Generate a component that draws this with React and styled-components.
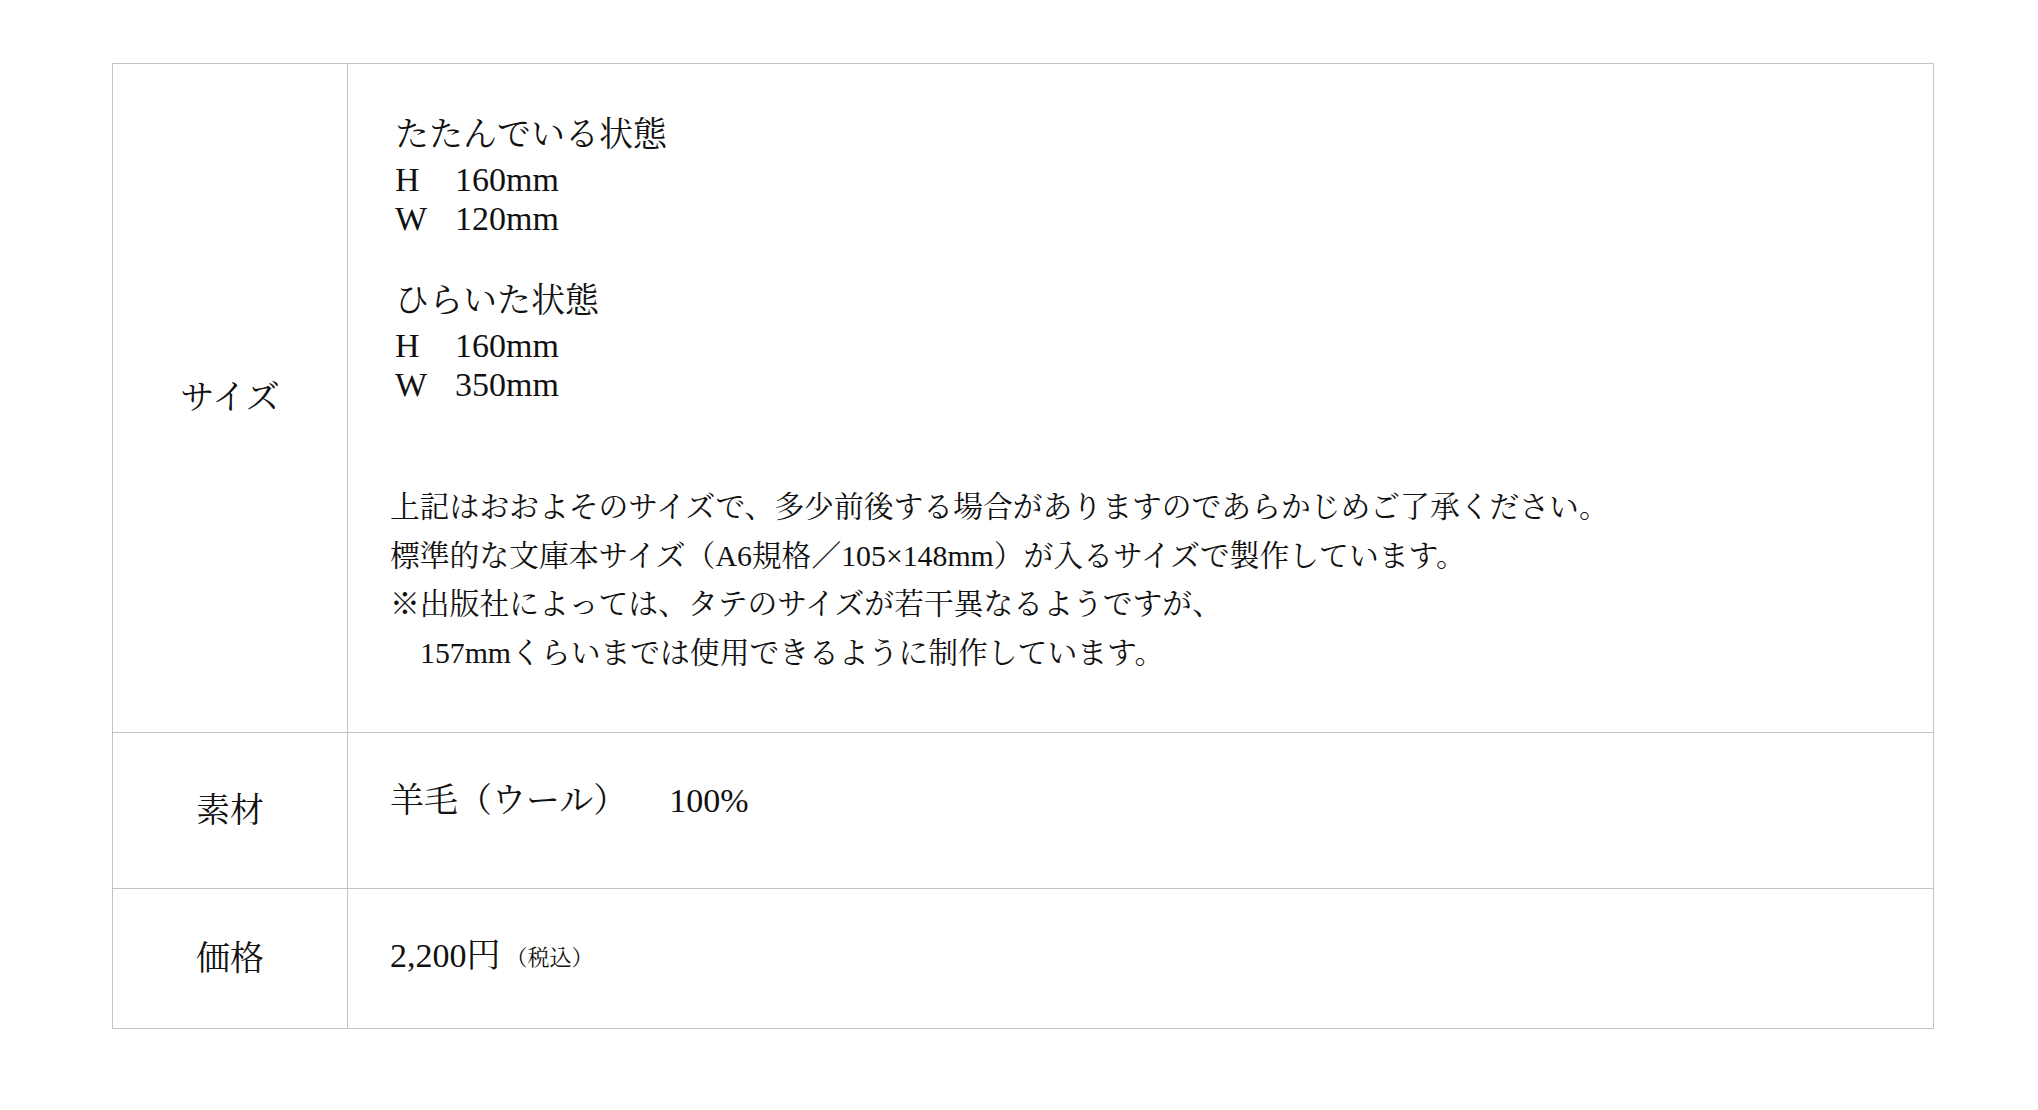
import React from "react";
import styled, { createGlobalStyle } from "styled-components";

const GlobalStyle = createGlobalStyle`
  html, body {
    margin: 0;
    padding: 0;
    background: #ffffff;
  }
  body {
    font-family: "Liberation Serif", "Noto Serif CJK JP", "Noto Sans CJK JP", serif;
    color: #111111;
  }
`;

const Page = styled.div`
  padding: 63px 0 60px 112px;
`;

const Table = styled.div`
  width: 1822px;
  box-sizing: border-box;
  border: 1px solid #c4c4c4;
  display: flex;
  flex-direction: column;
`;

const Row = styled.div`
  display: grid;
  grid-template-columns: 235px 1fr;
  border-bottom: ${(p) => (p.$last ? "none" : "1px solid #c4c4c4")};
`;

const Label = styled.div`
  border-right: 1px solid #c4c4c4;
  display: flex;
  align-items: center;
  justify-content: center;
  font-size: 34px;
  line-height: 48px;
`;

const Value = styled.div`
  padding: ${(p) => p.$pt}px 40px ${(p) => p.$pb}px 42px;
  font-size: 34px;
  line-height: 48px;
`;

const ValueLine = styled.div`
  height: 48px;
  display: flex;
  align-items: center;
  white-space: pre;
`;

const SizeBlock = styled.div`
  padding-left: 5px;
  margin-top: ${(p) => p.$mt || 0}px;
`;

const BlockTitle = styled.div`
  font-size: 34px;
  line-height: 48px;
  padding-top: 2px;
  margin-bottom: 1px;
`;

const Dimension = styled.div`
  display: flex;
  font-size: 34px;
  line-height: 39px;
`;

const Axis = styled.span`
  display: inline-block;
  width: 60px;
`;

const Note = styled.div`
  margin-top: 79px;
  font-size: 29.8px;
  line-height: 48.5px;
`;

const NoteLine = styled.div`
  padding-left: ${(p) => (p.$indent ? "30px" : "0")};
  white-space: nowrap;
`;

const Amount = styled.span`
  font-size: 34px;
  line-height: 1;
`;

const TaxNote = styled.span`
  font-size: 22px;
  line-height: 1;
  margin-left: 5px;
  padding-top: 4px;
`;

const Material = styled.span`
  line-height: 1;
`;

const Percent = styled.span`
  margin-left: 42px;
  line-height: 1;
`;

const dims = [
  { title: "たたんでいる状態", h: "160mm", w: "120mm", mt: 0 },
  { title: "ひらいた状態", h: "160mm", w: "350mm", mt: 37 },
];

export default function App() {
  return (
    <>
      <GlobalStyle />
      <Page>
        <Table>
          <Row>
            <Label>サイズ</Label>
            <Value $pt={45} $pb={55}>
              {dims.map((d) => (
                <SizeBlock key={d.title} $mt={d.mt}>
                  <BlockTitle>{d.title}</BlockTitle>
                  <Dimension>
                    <Axis>H</Axis>
                    <span>{d.h}</span>
                  </Dimension>
                  <Dimension>
                    <Axis>W</Axis>
                    <span>{d.w}</span>
                  </Dimension>
                </SizeBlock>
              ))}
              <Note>
                <NoteLine>
                  上記はおおよそのサイズで、多少前後する場合がありますのであらかじめご了承ください。
                </NoteLine>
                <NoteLine>
                  標準的な文庫本サイズ（A6規格／105×148mm）が入るサイズで製作しています。
                </NoteLine>
                <NoteLine>※出版社によっては、タテのサイズが若干異なるようですが、</NoteLine>
                <NoteLine $indent>157mmくらいまでは使用できるように制作しています。</NoteLine>
              </Note>
            </Value>
          </Row>
          <Row>
            <Label>素材</Label>
            <Value $pt={44} $pb={63}>
              <ValueLine>
                <Material>羊毛（ウール）</Material>
                <Percent>100%</Percent>
              </ValueLine>
            </Value>
          </Row>
          <Row $last>
            <Label>価格</Label>
            <Value $pt={43} $pb={48}>
              <ValueLine>
                <Amount>2,200円</Amount>
                <TaxNote>（税込）</TaxNote>
              </ValueLine>
            </Value>
          </Row>
        </Table>
      </Page>
    </>
  );
}
